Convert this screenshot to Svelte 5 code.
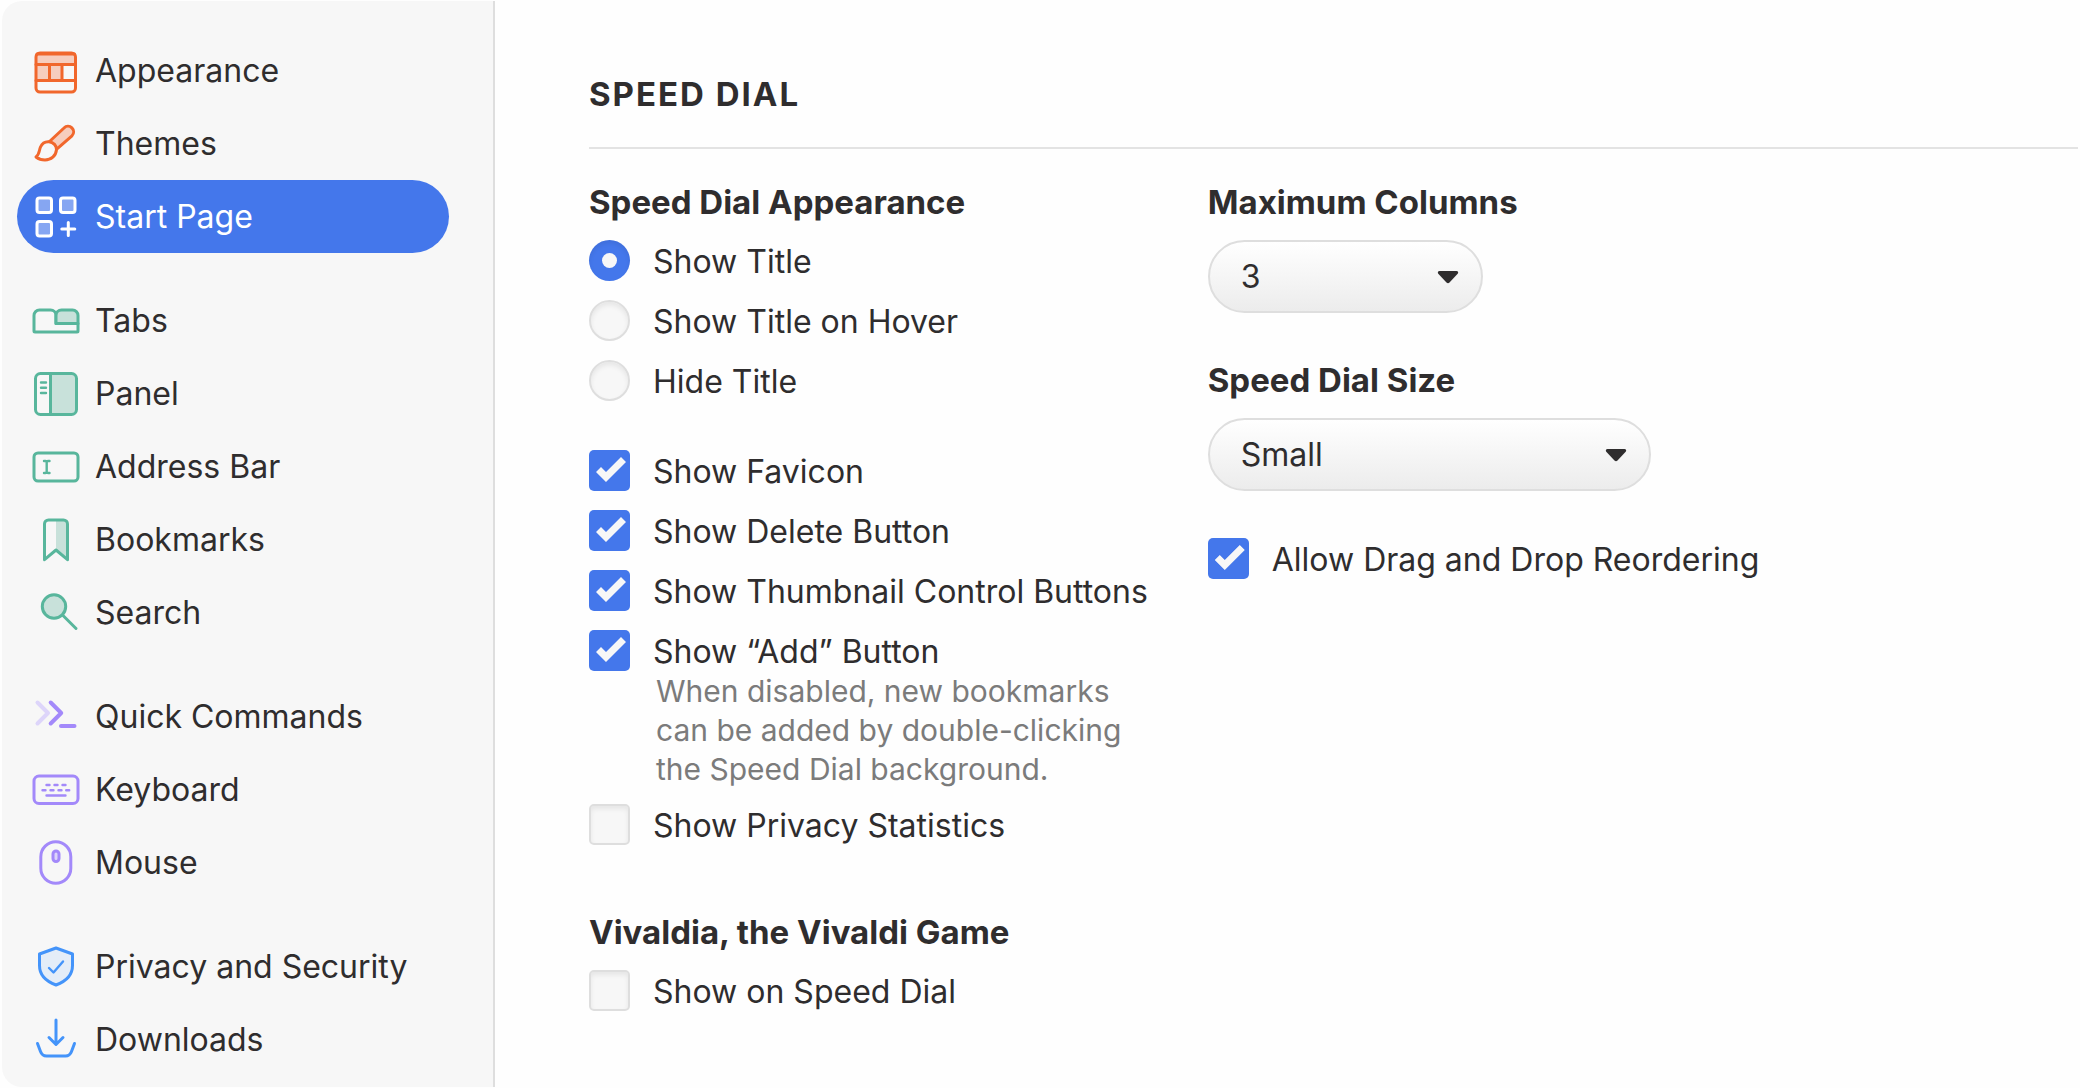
<script>
    const groups = [
        {
            color: 'orange',
            items: [
                { icon: 'appearance', label: 'Appearance' },
                { icon: 'themes', label: 'Themes' },
                { icon: 'start', label: 'Start Page' }
            ]
        },
        {
            color: 'green',
            items: [
                { icon: 'tabs', label: 'Tabs' },
                { icon: 'panel', label: 'Panel' },
                { icon: 'address', label: 'Address Bar' },
                { icon: 'bookmarks', label: 'Bookmarks' },
                { icon: 'search', label: 'Search' }
            ]
        },
        {
            color: 'purple',
            items: [
                { icon: 'commands', label: 'Quick Commands' },
                { icon: 'keyboard', label: 'Keyboard' },
                { icon: 'mouse', label: 'Mouse' }
            ]
        },
        {
            color: 'blue',
            items: [
                { icon: 'privacy', label: 'Privacy and Security' },
                { icon: 'downloads', label: 'Downloads' }
            ]
        }
    ];

    const titleModes = ['Show Title', 'Show Title on Hover', 'Hide Title'];

    let current = $state('Start Page');
    let titleMode = $state('Show Title');
    let columns = $state('3');
    let size = $state('Small');
    let options = $state({
        favicon: true,
        deleteButton: true,
        thumbnailControls: true,
        addButton: true,
        privacyStats: false,
        game: false,
        reorder: true
    });

    function select(e, label) {
        e.preventDefault();
        current = label;
    }
</script>

{#snippet navIcon(name)}
    <svg class="icon" viewBox="0 0 48 48" aria-hidden="true">
        {#if name === 'appearance'}
            <path class="tint" d="M5 8h38v9H5zM5 17h25v16H5z" />
            <rect x="4" y="6" width="39.500" height="39" rx="4" />
            <path d="M5 7h37.500M4 17.500h39.500M4 33.500h39.500M17.500 17.500v16M30 17.500v16" />
        {:else if name === 'themes'}
            <path class="tint" d="M17.500 21 32 7.500A5.500 5.500 0 0 1 40 15.500L25 28.500z" />
            <path d="M17.500 21.500 32 8A5.500 5.500 0 0 1 40 15.800L25 28.800" />
            <path d="M4 37C7.500 34.500 7 30.500 8.500 27c1.600-3.600 5-5.600 8.500-5.300 4.500.500 7.700 4 7.500 8C24 36 19 40 13 40c-3.500 0-6.500-1-9-3z" />
        {:else if name === 'start'}
            <g class="filled">
                <rect x="5" y="5" width="14.500" height="14.500" rx="2.500" />
                <rect x="28.500" y="5" width="14.500" height="14.500" rx="2.500" />
                <rect x="5" y="28.500" width="14.500" height="14.500" rx="2.500" />
            </g>
            <path d="M36.300 29.500v13M29.800 36h13" />
        {:else if name === 'tabs'}
            <path d="M2 18.500a5.500 5.500 0 0 1 5.500-5.500h11a5.500 5.500 0 0 1 5.500 5.500v8h22V34a1 1 0 0 1-1 1H3a1 1 0 0 1-1-1z" />
            <path class="filled" d="M24 26.500v-8a5.500 5.500 0 0 1 5.500-5.500h11a5.500 5.500 0 0 1 5.500 5.500v8z" />
        {:else if name === 'panel'}
            <path class="tint" d="M18.500 4H44v40H18.500z" />
            <rect x="3.500" y="3.500" width="41" height="41" rx="5" />
            <path d="M18.500 4v40" />
            <path class="thin" d="M9 12.500h5M9 17.700h5M9 23h5" />
        {:else if name === 'address'}
            <rect x="2" y="10" width="44" height="28" rx="4" />
            <path class="thin" d="M12 18h1.500c.800 0 1.200.400 1.200 1.200v9.600c0 .800-.400 1.200-1.200 1.200H12M17.500 18H16c-.800 0-1.300.400-1.300 1.200v9.600c0 .800.500 1.200 1.300 1.200h1.500" />
        {:else if name === 'bookmarks'}
            <path class="tint" d="M24 4h11.500v39.500L24 34z" />
            <path d="M12.500 43.700V8a4 4 0 0 1 4-4h15a4 4 0 0 1 4 4v35.700L24 34z" />
        {:else if name === 'search'}
            <circle class="filled" cx="22" cy="17.500" r="11.700" />
            <path d="m30.500 26 13.500 13.500" />
        {:else if name === 'commands'}
            <path class="thick faint" d="m5.500 9.500 10.500 10.500-10.500 10.500" />
            <path class="thick" d="m18.700 9.500 10.500 10.500-10.500 10.500M29 33h13.500" />
        {:else if name === 'keyboard'}
            <rect x="2" y="10" width="44" height="27.500" rx="5" />
            <path class="thin" d="M14.500 19h3M22.500 19h3M30.500 19h3M10.500 24.200h3M18.500 24.200h3M26.500 24.200h3M34.200 24.200h3M14.500 29.500h19" />
        {:else if name === 'mouse'}
            <rect x="8.800" y="2.700" width="30" height="41.600" rx="15" />
            <rect class="filled" x="21" y="12" width="6" height="10.500" rx="3" />
        {:else if name === 'privacy'}
            <path class="filled" d="m24 5 16.500 6v11.500c0 9.500-5.500 15.500-16.500 19.500C13 38 7.500 32 7.500 22.500V11z" />
            <path class="thin" d="m17 25 4.500 4.500 9.500-11" />
        {:else if name === 'downloads'}
            <path d="M24 4v24M17 21.500l7 7 7-7M5.500 27.500l3 8c1.200 3.300 2.500 4.500 6 4.500h19c3.500 0 4.800-1.200 6-4.500l3-8" />
        {/if}
    </svg>
{/snippet}

{#snippet checkbox(key, label)}
    <label class="row">
        <input type="checkbox" bind:checked={options[key]} />
        <span>{label}</span>
    </label>
{/snippet}

{#snippet arrow()}
    <svg class="arrow" viewBox="0 0 22 14" aria-hidden="true">
        <path d="M2.500 1h17c1.600 0 2.200 1.600 1.200 2.800l-8.200 8.800c-.900.900-2.100.900-3 0L1.300 3.800C.300 2.600.900 1 2.500 1z" />
    </svg>
{/snippet}

<div class="settings">
    <nav class="sidebar">
        {#each groups as group}
            <div class="group {group.color}">
                {#each group.items as item}
                    <a
                        href="#{item.icon}"
                        class="item"
                        class:active={current === item.label}
                        onclick={(e) => select(e, item.label)}
                    >
                        {@render navIcon(item.icon)}
                        <span>{item.label}</span>
                    </a>
                {/each}
            </div>
        {/each}
    </nav>

    <main>
        <h1>SPEED DIAL</h1>

        <div class="columns">
            <div class="column">
                <section role="radiogroup" aria-labelledby="appearance-title">
                    <h2 id="appearance-title">Speed Dial Appearance</h2>
                    <div class="rows">
                        {#each titleModes as mode}
                            <label class="row">
                                <input type="radio" name="title-mode" value={mode} bind:group={titleMode} />
                                <span>{mode}</span>
                            </label>
                        {/each}
                    </div>
                </section>

                <div class="rows checks">
                    {@render checkbox('favicon', 'Show Favicon')}
                    {@render checkbox('deleteButton', 'Show Delete Button')}
                    {@render checkbox('thumbnailControls', 'Show Thumbnail Control Buttons')}
                    {@render checkbox('addButton', 'Show “Add” Button')}
                </div>
                <p class="hint">
                    When disabled, new bookmarks<br />
                    can be added by double-clicking<br />
                    the Speed Dial background.
                </p>
                {@render checkbox('privacyStats', 'Show Privacy Statistics')}

                <section class="game">
                    <h2>Vivaldia, the Vivaldi Game</h2>
                    {@render checkbox('game', 'Show on Speed Dial')}
                </section>
            </div>

            <div class="column">
                <h2><label for="columns">Maximum Columns</label></h2>
                <div class="select narrow">
                    <select id="columns" bind:value={columns}>
                        <option>1</option>
                        <option>2</option>
                        <option>3</option>
                        <option>4</option>
                    </select>
                    {@render arrow()}
                </div>

                <h2><label for="size">Speed Dial Size</label></h2>
                <div class="select">
                    <select id="size" bind:value={size}>
                        <option>Small</option>
                        <option>Medium</option>
                        <option>Large</option>
                    </select>
                    {@render arrow()}
                </div>

                {@render checkbox('reorder', 'Allow Drag and Drop Reordering')}
            </div>
        </div>
    </main>
</div>

<style>
    :global(body) {
        margin: 0;
        background: #fefefe;
    }

    .settings {
        display: flex;
        box-sizing: border-box;
        min-height: 100vh;
        padding: 1px 2px;
        font-family: Inter, 'Noto Sans', sans-serif;
        font-size: 32px;
        line-height: 40px;
        color: #2f2d2e;
    }

    .sidebar {
        flex: none;
        display: flex;
        flex-direction: column;
        gap: 31px;
        box-sizing: border-box;
        width: 493px;
        padding: 33px 44px 10px 15px;
        background: #f7f7f7;
        border-right: 2px solid #dedede;
        border-radius: 20px 0 0 20px;
    }

    .item {
        display: flex;
        align-items: center;
        gap: 15px;
        height: 73px;
        padding: 0 15px;
        border-radius: 37px;
        color: inherit;
        text-decoration: none;
        white-space: nowrap;
    }

    .item.active {
        --line: #fff;
        --tint: #86a6f2;
        background: #4477eb;
        color: #fff;
    }

    .orange {
        --line: #f1672c;
        --tint: #f6cdbe;
    }

    .green {
        --line: #58b69c;
        --tint: #c8e1da;
    }

    .purple {
        --line: #a389fa;
        --tint: #ddd5fa;
    }

    .blue {
        --line: #4494fa;
        --tint: #e4edf8;
    }

    .icon {
        flex: none;
        width: 48px;
        height: 48px;
        fill: none;
        stroke: var(--line);
        stroke-width: 3;
        stroke-linecap: round;
        stroke-linejoin: round;
    }

    .icon .tint {
        fill: var(--tint);
        stroke: none;
    }

    .icon .filled {
        fill: var(--tint);
    }

    .icon .thin {
        stroke-width: 2.4;
    }

    .icon .thick {
        stroke-width: 4;
    }

    .icon .faint {
        stroke: var(--tint);
    }

    main {
        flex: 1;
        min-width: 0;
        padding: 73px 0 40px 94px;
    }

    h1 {
        margin: 0 0 33px;
        padding-bottom: 33px;
        border-bottom: 2px solid #e3e3e3;
        font-size: 33px;
        font-weight: 700;
        letter-spacing: 2px;
        line-height: 40px;
    }

    h2 {
        margin: 0 0 17px;
        font-size: 33px;
        font-weight: 700;
        line-height: 41px;
    }

    .columns {
        display: grid;
        grid-template-columns: 5fr 7fr;
        padding-right: 4px;
    }

    .rows {
        display: flex;
        flex-direction: column;
        gap: 19px;
    }

    .checks {
        margin-top: 49px;
    }

    .row {
        display: flex;
        align-items: center;
        gap: 23px;
        height: 41px;
        white-space: nowrap;
    }

    .row span {
        padding-top: 2px;
    }

    .row input {
        appearance: none;
        flex: none;
        box-sizing: border-box;
        width: 41px;
        height: 41px;
        margin: 0;
        border: 2px solid #dedede;
        border-radius: 5px;
        background: #f7f7f7;
        box-shadow: inset 0 3px 5px rgba(0, 0, 0, 0.07);
    }

    .row input[type='radio'] {
        border-radius: 50%;
    }

    .row input:checked {
        display: grid;
        place-items: center;
        border: none;
        background: #4477eb;
    }

    .row input:checked::before {
        content: '';
        background: #f7f7f7;
    }

    .row input[type='checkbox']:checked {
        box-shadow: none;
    }

    .row input[type='checkbox']:checked::before {
        width: 41px;
        height: 41px;
        clip-path: polygon(7px 22px, 12px 17px, 17px 22px, 32px 7px, 37px 12px, 17px 32px);
    }

    .row input[type='radio']:checked::before {
        width: 15px;
        height: 15px;
        border-radius: 50%;
    }

    .hint {
        margin: 1px 0 15px;
        padding-left: 67px;
        font-size: 30px;
        line-height: 39px;
        color: #7b7b7b;
    }

    .game {
        margin-top: 67px;
    }

    .select {
        position: relative;
        width: 443px;
        margin-bottom: 47px;
    }

    .select.narrow {
        width: 275px;
    }

    select {
        appearance: none;
        display: block;
        box-sizing: border-box;
        width: 100%;
        height: 73px;
        padding: 0 60px 0 31px;
        border: 2px solid #dedede;
        border-radius: 37px;
        background: linear-gradient(#fff, #ececec);
        font: inherit;
        color: inherit;
    }

    .arrow {
        position: absolute;
        top: 30px;
        right: 24px;
        width: 22px;
        height: 14px;
        fill: #2f2d2e;
        pointer-events: none;
    }
</style>
